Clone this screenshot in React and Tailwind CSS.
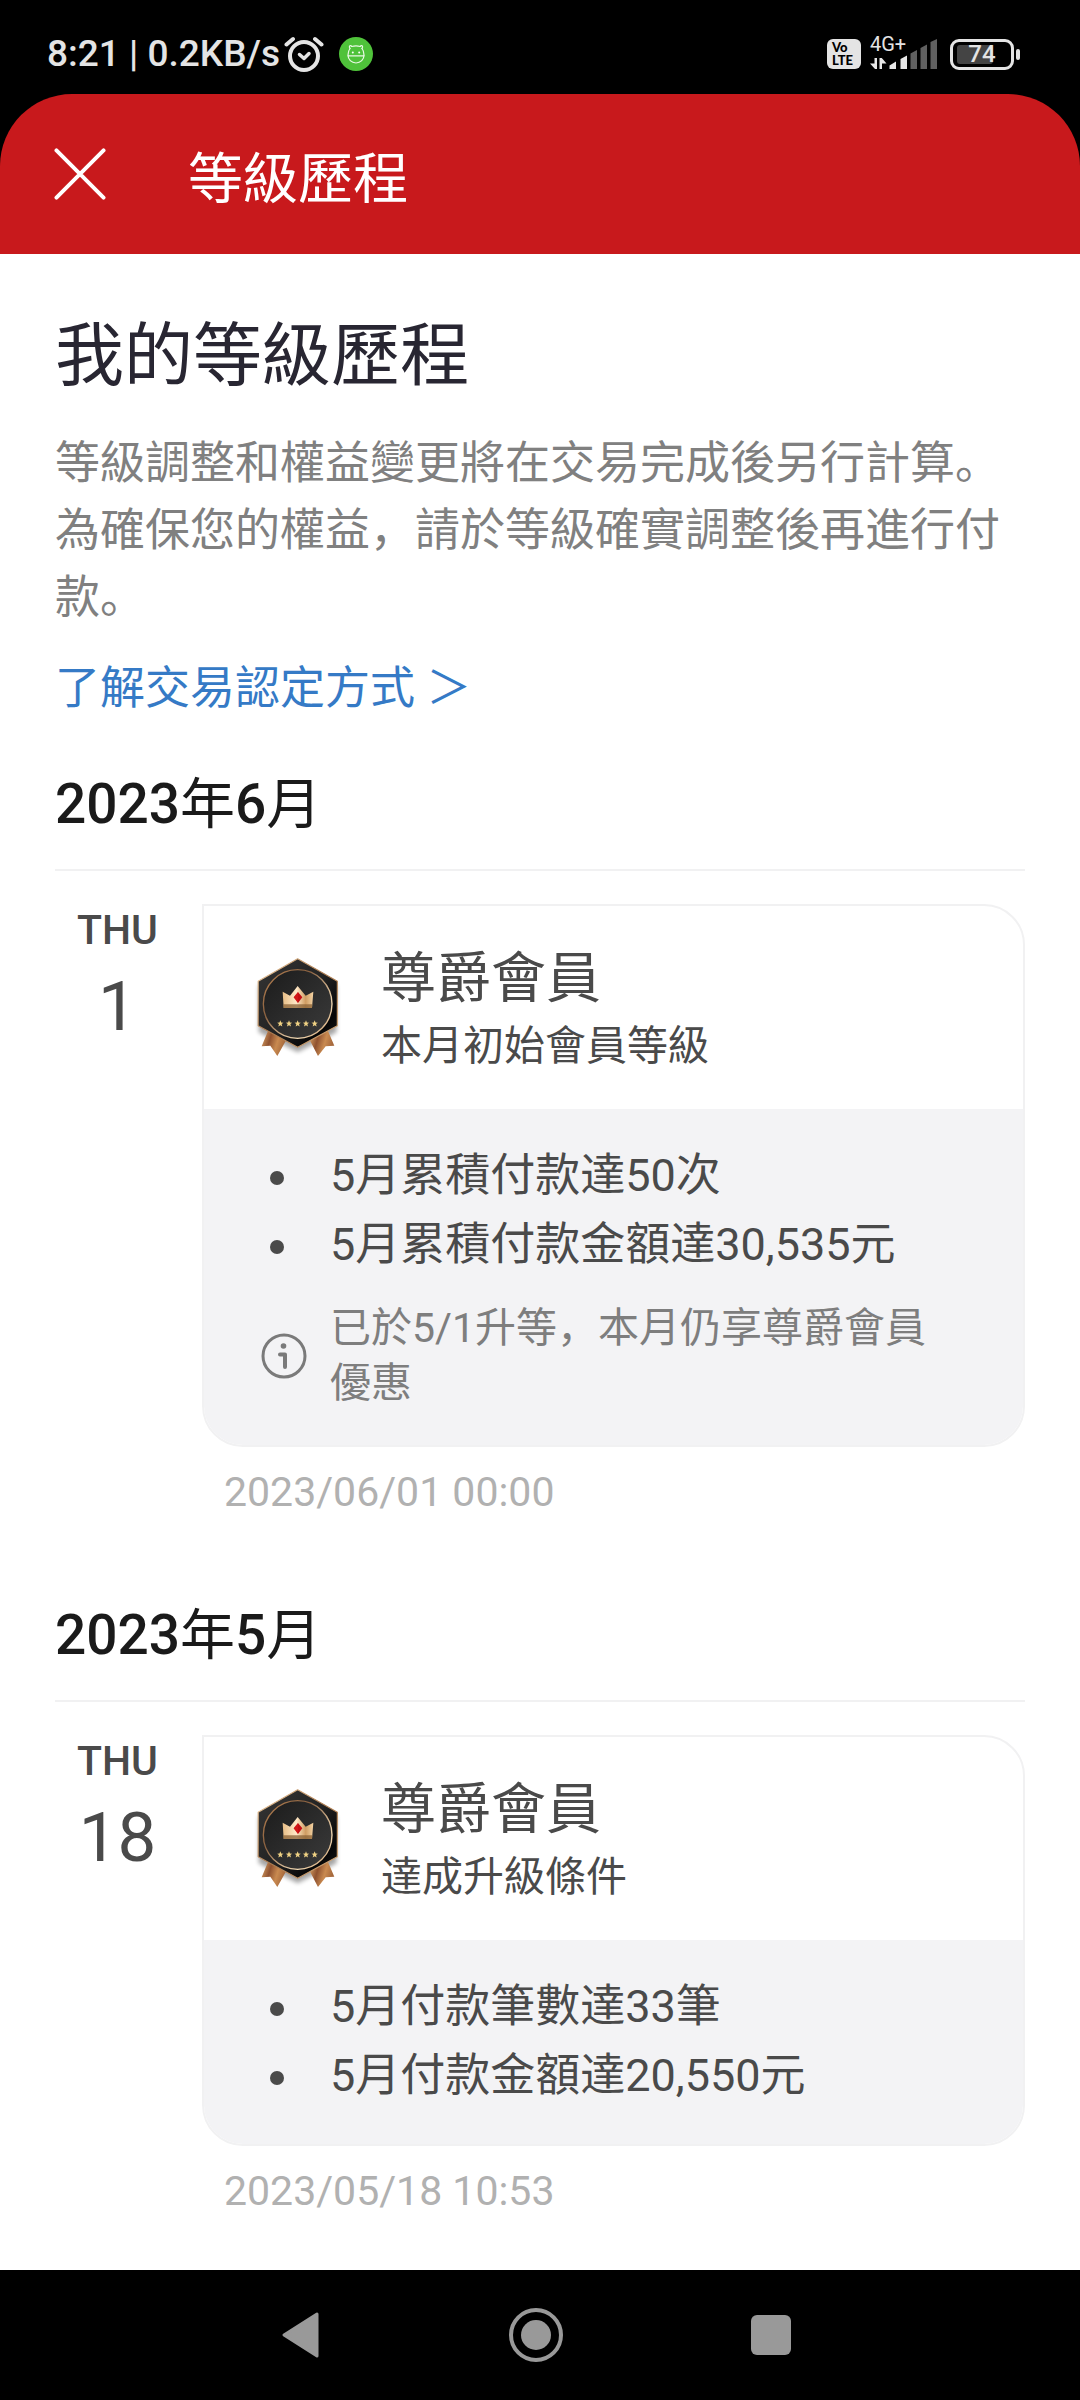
const sections = [
  {
    year: '2023',
    month: '6',
    weekday: 'THU',
    day: '1',
    level: '尊爵會員',
    reason: '本月初始會員等級',
    conditions: ['5月累積付款達50次', '5月累積付款金額達30,535元'],
    note: '已於5/1升等，本月仍享尊爵會員優惠',
    time: '2023/06/01 00:00',
  },
  {
    year: '2023',
    month: '5',
    weekday: 'THU',
    day: '18',
    level: '尊爵會員',
    reason: '達成升級條件',
    conditions: ['5月付款筆數達33筆', '5月付款金額達20,550元'],
    time: '2023/05/18 10:53',
  },
];

function AlarmIcon() {
  return (
    <svg className="h-[36px] w-[40px]" viewBox="0 0 40 36" fill="none" stroke="#e4e4e4" strokeLinecap="round" strokeLinejoin="round" aria-hidden="true">
      <circle cx="20" cy="20" r="14" strokeWidth="4" />
      <path d="M2.500 8.500 9 3M37.500 8.500 31 3" strokeWidth="4" />
      <path d="M15.500 18.500 20 22.500 25 17.500" strokeWidth="3.500" />
    </svg>
  );
}

function GreenAppIcon() {
  return (
    <svg className="h-[34px] w-[34px]" viewBox="0 0 34 34" fill="none" aria-hidden="true">
      <circle cx="17" cy="17" r="17" fill="#4fc23a" />
      <g stroke="#e9f8e4" strokeWidth="1.200" strokeLinecap="round" strokeLinejoin="round">
        <path d="M11 11.500C9.500 9 11 7.500 12.800 9.500c2.600-.7 5.800-.7 8.400 0C23 7.500 24.500 9 23 11.500" />
        <path d="M11 11.500c-1.200 1.500-2 3.500-2 6.500 0 4.500 3.400 8 8 8s8-3.500 8-8c0-3-.8-5-2-6.500" />
        <path d="M9 18.800h16" />
      </g>
      <circle cx="13.800" cy="15.500" r="1" fill="#fff" />
      <circle cx="20.200" cy="15.500" r="1" fill="#fff" />
    </svg>
  );
}

function SignalIcon() {
  return (
    <svg className="h-[30px] w-[68px]" viewBox="0 0 68 30" aria-hidden="true">
      <g fill="#e8e8e8">
        <path d="M4.500 19H7v11H5L0 24.500h4.500zM9.500 19h2.300l4.700 5.500H12V30H9.500z" />
        <path d="M19.500 26.500 26 22.500V30h-6.500zM30.500 20 37 16.500V30h-6.500z" />
      </g>
      <path fill="#606060" d="M40.500 14.500 47 11v19h-6.500zM50.500 9 57 5.500V30h-6.500zM60.500 3 67 0v30h-6.500z" />
    </svg>
  );
}

function StatusBar() {
  return (
    <div className="flex h-[94px] items-center justify-between bg-black pr-[60px] pl-[47px] pt-[14px] text-[#e4e4e4]">
      <div className="flex items-center">
        <span className="text-[37px] leading-[44px] font-medium">8:21 | 0.2KB/s</span>
        <span className="ml-[4px]"><AlarmIcon /></span>
        <span className="ml-[15px]"><GreenAppIcon /></span>
      </div>
      <div className="flex items-center">
        <div className="flex h-[30px] w-[34px] flex-col justify-center rounded-[6px] bg-[#e4e4e4] pl-[5px] font-['Lato',sans-serif] text-[13px] leading-[13px] font-black text-black">
          <span>Vo</span>
          <span>LTE</span>
        </div>
        <div className="relative ml-[9px]">
          <SignalIcon />
          <span className="absolute -top-[7px] left-0 text-[20px] leading-[24px]">4G+</span>
        </div>
        <div className="relative ml-[12px] flex h-[31px] w-[64px] items-center justify-center rounded-[9px] border-[3px] border-[#e4e4e4]">
          <span className="absolute top-[3px] left-[4px] h-[19px] w-[36px] rounded-[3px] bg-[#444444]" />
          <span className="relative text-[24px] leading-[25px] font-medium">74</span>
        </div>
        <span className="ml-[2px] h-[11px] w-[4px] rounded-[2px] bg-[#e4e4e4]" />
      </div>
    </div>
  );
}

function Star({ x }) {
  return <path transform={`translate(${x} 278)`} fill="#f0d284" d="M0-10 2.600-3.200 9.500-3 4 1.300 6 8.500 0 4.500-6 8.500-4 1.300-9.500-3-2.600-3.200z" />;
}

function Badge() {
  return (
    <svg className="h-[104px] w-[88px] shrink-0" viewBox="72 72 264 312" aria-hidden="true">
      <defs>
        <linearGradient id="hex" x1="0" y1="0" x2="1" y2="1">
          <stop offset="0" stopColor="#353535" />
          <stop offset="0.500" stopColor="#232323" />
          <stop offset="0.800" stopColor="#060606" />
          <stop offset="1" stopColor="#1c1c1c" />
        </linearGradient>
        <linearGradient id="edge" x1="0" y1="0" x2="1" y2="1">
          <stop offset="0" stopColor="#f0cda0" />
          <stop offset="0.500" stopColor="#a9794e" />
          <stop offset="1" stopColor="#d9ae7c" />
        </linearGradient>
        <linearGradient id="ring" x1="0" y1="0" x2="1" y2="1">
          <stop offset="0" stopColor="#b98352" />
          <stop offset="0.350" stopColor="#8a6140" />
          <stop offset="0.750" stopColor="#f4dcb6" />
          <stop offset="1" stopColor="#b98352" />
        </linearGradient>
        <linearGradient id="disc" x1="0" y1="0" x2="1" y2="1">
          <stop offset="0" stopColor="#1b1b1b" />
          <stop offset="1" stopColor="#3b3b3b" />
        </linearGradient>
        <linearGradient id="crown" x1="0" y1="0" x2="1" y2="0">
          <stop offset="0" stopColor="#e7bd86" />
          <stop offset="0.450" stopColor="#ffe9c8" />
          <stop offset="0.750" stopColor="#cf9c62" />
          <stop offset="1" stopColor="#f3d3a4" />
        </linearGradient>
        <linearGradient id="ribbon" x1="0" y1="0" x2="1" y2="0.300">
          <stop offset="0" stopColor="#e3ac6b" />
          <stop offset="0.400" stopColor="#8f5230" />
          <stop offset="0.700" stopColor="#c98a50" />
          <stop offset="1" stopColor="#a5683c" />
        </linearGradient>
        <filter id="shade" x="-20%" y="-20%" width="140%" height="140%">
          <feGaussianBlur stdDeviation="7" />
        </filter>
      </defs>
      <path d="M203 98 320 164V304L203 364 86 304V164z" fill="#000" opacity="0.350" filter="url(#shade)" />
      <path d="M115 298 95 346l26-2 21 31 28-50z" fill="url(#ribbon)" />
      <path d="M293 298l20 46-26 2-23 29-26-50z" fill="url(#ribbon)" />
      <path d="M203 83.500 322 151V284L203 349 84.500 284V151z" fill="url(#hex)" stroke="url(#edge)" strokeWidth="3.500" strokeLinejoin="round" />
      <circle cx="203" cy="219" r="103" fill="url(#disc)" stroke="url(#ring)" strokeWidth="4" />
      <path d="M158 182 180 194 203 165 227 194 250 182 246 231H161z" fill="url(#crown)" />
      <path d="M160 220h87l-1 11h-85z" fill="#8a6236" opacity="0.750" />
      <path d="M204 183 217 199 204 216 191 199z" fill="#c40d12" />
      <path d="M204 183v33l-13-17z" fill="#e0201c" opacity="0.500" />
      <Star x={151} />
      <Star x={177} />
      <Star x={203} />
      <Star x={228} />
      <Star x={254} />
    </svg>
  );
}

function InfoIcon() {
  return (
    <svg className="h-[46px] w-[46px] shrink-0" viewBox="0 0 46 46" fill="none" stroke="#7a7a7a" aria-hidden="true">
      <circle cx="23" cy="23" r="21" strokeWidth="3" />
      <path d="M19 21.500h5V34" strokeWidth="4" strokeLinecap="round" strokeLinejoin="round" />
      <circle cx="22.500" cy="13" r="2.800" fill="#7a7a7a" stroke="none" />
    </svg>
  );
}

function HistorySection({ item }) {
  return (
    <section>
      <h2 className="border-b-2 border-[#f1f1f2] pb-[33px] text-[55px] leading-[64px] font-medium text-[#1a1a1a]">
        {item.year}
        <span className="font-normal">年</span>
        {item.month}
        <span className="font-normal">月</span>
      </h2>
      <div className="mt-[33px] flex gap-[22px]">
        <div className="flex w-[125px] shrink-0 flex-col items-center pt-[2px] text-[#4a4a4a]">
          <span className="text-[41px] leading-[48px] font-medium">{item.weekday}</span>
          <span className="mt-[13px] text-[69px] leading-[80px]">{item.day}</span>
        </div>
        <div className="min-w-0 flex-1">
          <article className="overflow-hidden rounded-[41px] rounded-tl-none border-2 border-[#f1f1f2]">
            <div className="flex items-center gap-[39px] pt-[34px] pr-[40px] pb-[35px] pl-[50px] text-[#4a4a4a]">
              <Badge />
              <div className="pt-[6px]">
                <h3 className="text-[55px] leading-[64px]">{item.level}</h3>
                <p className="mt-[8px] text-[41px] leading-[56px]">{item.reason}</p>
              </div>
            </div>
            <div className="bg-[#f3f3f5] pt-[32px] pr-[75px] pb-[34px] pl-[57px]">
              <ul>
                {item.conditions.map((text) => (
                  <li key={text} className="flex items-center gap-[23px] text-[45px] leading-[69px] whitespace-nowrap text-[#4a4a4a]">
                    <span className="flex w-[46px] shrink-0 pt-[4px] pl-[9px]">
                      <span className="h-[14px] w-[14px] rounded-full bg-[#4a4a4a]" />
                    </span>
                    {text}
                  </li>
                ))}
              </ul>
              {item.note && (
                <div className="mt-[22px] flex items-center gap-[23px]">
                  <InfoIcon />
                  <p className="text-[41px] leading-[55px] text-[#7e7e7e]">{item.note}</p>
                </div>
              )}
            </div>
          </article>
          <time className="mt-[21px] block pl-[22px] text-[41px] leading-[48px] text-[#b1b1b1]">{item.time}</time>
        </div>
      </div>
    </section>
  );
}

function NavBar() {
  return (
    <nav className="flex h-[130px] items-center justify-center bg-black pr-[8px]">
      <button type="button" aria-label="返回" className="flex w-[235px] justify-center">
        <svg className="h-[46px] w-[40px]" viewBox="0 0 40 46" aria-hidden="true">
          <path d="M36 2v42L3 23z" fill="#999" stroke="#999" strokeWidth="3" strokeLinejoin="round" />
        </svg>
      </button>
      <button type="button" aria-label="主畫面" className="flex w-[235px] justify-center">
        <svg className="h-[54px] w-[54px]" viewBox="0 0 54 54" aria-hidden="true">
          <circle cx="27" cy="27" r="25" fill="none" stroke="#999" strokeWidth="4" />
          <circle cx="27" cy="27" r="15" fill="#999" />
        </svg>
      </button>
      <button type="button" aria-label="最近使用" className="flex w-[235px] justify-center">
        <span className="h-[40px] w-[40px] rounded-[6px] bg-[#999999]" />
      </button>
    </nav>
  );
}

export default function App() {
  return (
    <div lang="zh-CN" className="flex min-h-screen flex-col bg-black font-['Roboto','Noto_Sans_CJK_SC',sans-serif]">
      <StatusBar />
      <header className="flex h-[160px] items-center gap-[82px] rounded-t-[72px] bg-[#c8191c] pl-[54px] text-white">
        <button type="button" aria-label="關閉">
          <svg className="h-[52px] w-[52px]" viewBox="0 0 53 53" fill="none" stroke="currentColor" strokeWidth="4" strokeLinecap="round" aria-hidden="true">
            <path d="M2.500 2.500l48 48M50.500 2.500l-48 48" />
          </svg>
        </button>
        <div className="pt-[10px] text-[55px] leading-[64px]">等級歷程</div>
      </header>
      <main className="flex-1 bg-white px-[55px] pt-[53px] pb-[55px]">
        <h1 className="text-[69px] leading-[100px] text-[#282632]">我的等級歷程</h1>
        <p className="mt-[23px] text-[45px] leading-[67px] text-[#808080]">
          等級調整和權益變更將在交易完成後另行計算。為確保您的權益，請於等級確實調整後再進行付款。
        </p>
        <a href="#rules" className="mt-[24px] block text-[45px] leading-[67px] text-[#357ac6]">了解交易認定方式 ＞</a>
        <div className="mt-[50px] flex flex-col gap-[87px]">
          {sections.map((item) => (
            <HistorySection key={item.time} item={item} />
          ))}
        </div>
      </main>
      <NavBar />
    </div>
  );
}
